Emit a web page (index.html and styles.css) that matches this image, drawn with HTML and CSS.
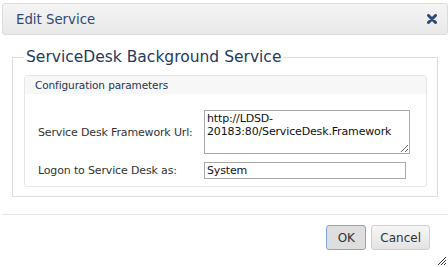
FILE: index.html
```html
<!DOCTYPE html>
<html>
<head>
    <title>Edit Service</title>
    <link rel="stylesheet" href="styles.css">
</head>
<body>
    <div class="dialog">
        <div class="titlebar">
            <span class="title">Edit Service</span>
            <svg class="close" width="10" height="10" viewBox="0 0 10 10">
                <path d="M1.5 1.5 L8.5 8.5 M8.5 1.5 L1.5 8.5" stroke="#2d4a77" stroke-width="3" stroke-linecap="round"/>
            </svg>
        </div>
        <div class="content">
            <fieldset class="service">
                <legend>ServiceDesk Background Service</legend>
                <div class="panel">
                    <div class="panel-header">Configuration parameters</div>
                    <div class="panel-body">
                        <div class="row">
                            <label for="url">Service Desk Framework Url:</label>
                            <textarea id="url">http://LDSD-20183:80/ServiceDesk.Framework</textarea>
                        </div>
                        <div class="row">
                            <label for="logon">Logon to Service Desk as:</label>
                            <input type="text" id="logon" value="System">
                        </div>
                    </div>
                </div>
            </fieldset>
        </div>
        <div class="buttons">
            <button type="button" class="btn btn-ok">OK</button>
            <button type="button" class="btn">Cancel</button>
        </div>
        <svg class="grip" width="10" height="10" viewBox="0 0 10 10">
            <path d="M9 1 L1 9 M9 4 L4 9 M9 7 L7 9" stroke="#333" stroke-width="1"/>
        </svg>
    </div>
</body>
</html>
```

FILE: styles.css
```css
body {
    margin: 0;
    font-family: Tahoma, "DejaVu Sans", Verdana, sans-serif;
    font-size: 11px;
    letter-spacing: -0.15px;
    color: #333;
    background: #fff;
}

.dialog {
    position: relative;
    width: 446px;
    height: 264px;
    border-right: 1px solid #e4e4e4;
    border-bottom: 1px solid #e4e4e4;
    padding: 3px 0 0 2px;
}

.titlebar {
    display: flex;
    align-items: center;
    justify-content: space-between;
    height: 30px;
    padding: 0 10px 0 13px;
    border: 1px solid #dcdcdc;
    border-radius: 3px;
    background: linear-gradient(#f4f4f4, #e9e9e9);
}

.title {
    font-size: 13.3px;
    letter-spacing: 0;
    color: #2d4a77;
}

.close {
    display: block;
}

.content {
    padding: 13px 10px 17px 10px;
    border-bottom: 1px solid #e6e6e6;
}

.service {
    margin: 0;
    padding: 9px 10px 9px 11px;
    border: 1px solid #dcdcdc;
}

.service legend {
    padding: 0 2px;
    font-size: 15.5px;
    letter-spacing: 0;
    color: #233a5e;
}

.panel {
    border: 1px solid #e6e6e6;
    border-radius: 3px;
}

.panel-header {
    height: 18px;
    line-height: 18px;
    padding-left: 10px;
    font-size: 10.5px;
    letter-spacing: -0.1px;
    background: #f7f7f7;
    color: #1f3556;
}

.panel-body {
    padding: 16px 0 7px 13px;
}

.row {
    display: flex;
    align-items: center;
}

.row + .row {
    margin-top: 8px;
}

.row label {
    width: 166px;
}

textarea,
input[type="text"] {
    font-family: Tahoma, "DejaVu Sans", Verdana, sans-serif;
    font-size: 11px;
    letter-spacing: -0.15px;
    color: #111;
    border: 1px solid #a9a9a9;
    box-sizing: border-box;
    margin: 0;
    padding: 1px 2px;
}

textarea {
    width: 206px;
    height: 44px;
}

input[type="text"] {
    width: 202px;
    height: 17px;
}

.buttons {
    display: flex;
    justify-content: flex-end;
    gap: 5px;
    padding: 10px 18px 0 0;
}

.btn {
    font-family: Tahoma, "DejaVu Sans", Verdana, sans-serif;
    font-size: 12px;
    color: #333;
    height: 25px;
    padding: 0 8px;
    border: 1px solid #cfcfcf;
    border-radius: 3px;
    background: linear-gradient(#f6f6f6, #e3e3e3);
}

.btn-ok {
    width: 40px;
    border-color: #7ea6e0;
    background: #dedede;
}

.grip {
    position: absolute;
    right: 1px;
    bottom: 1px;
}
```
